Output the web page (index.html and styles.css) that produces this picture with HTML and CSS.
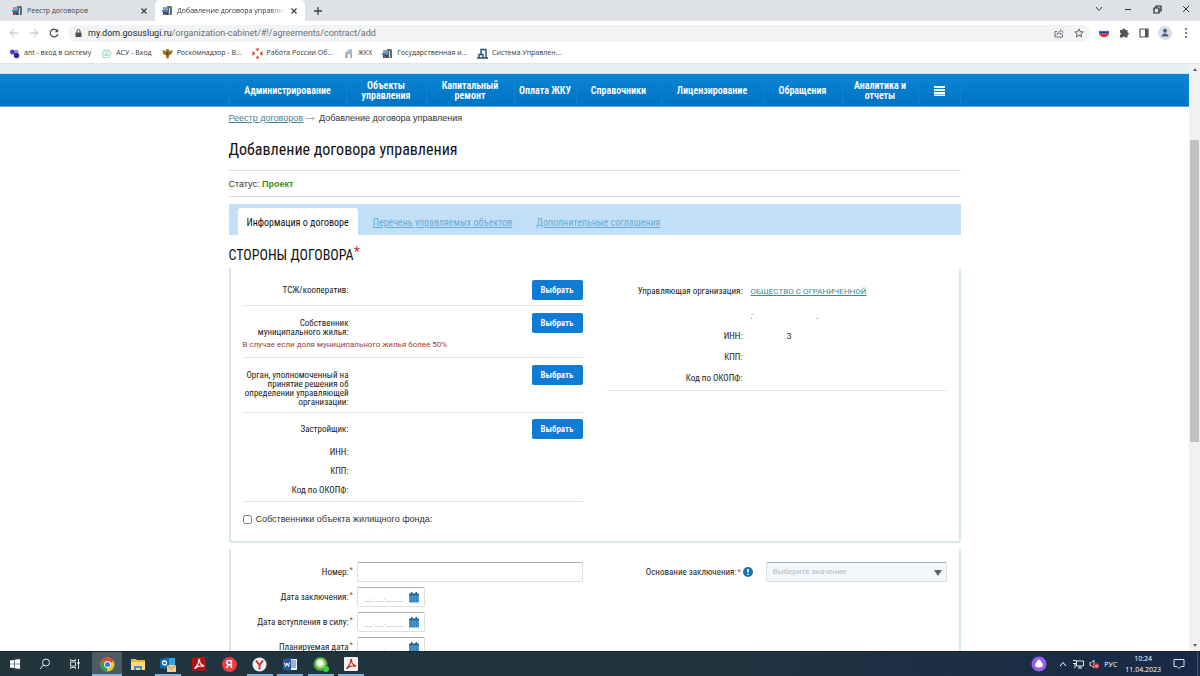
FILE: index.html
```html
<!DOCTYPE html>
<html lang="ru">
<head>
<meta charset="utf-8">
<title>Добавление договора управления</title>
<link rel="stylesheet" href="styles.css">
</head>
<body>
<svg class="defs" aria-hidden="true">
  <symbol id="house" viewBox="0 0 11 11"><path d="M1 2h4v6H1z" fill="#8aa4b4"/><path d="M5 1h4l1 1v8H6z" fill="#53717f"/><path d="M7 3h1v7H7z" fill="#c9dbe3"/><path d="M0 5h6v2H0z" fill="#3e86c1"/><path d="M1 7h5v3H1z" fill="#394c5c"/><path d="M2 8h2v2H2z" fill="#c8483e"/></symbol>
  <symbol id="cross" viewBox="0 0 8 8"><path d="M1.5 1.5l5 5m0-5l-5 5" stroke="#3c4043" stroke-width="1.2"/></symbol>
  <symbol id="cal" viewBox="0 0 10 11"><path d="M0 2h10v8.500H0z" fill="#4e9bd0"/><path d="M0 1.500h10v2H0z" fill="#24618f"/><path d="M2 0h1.500v2H2zm4.500 0H8v2H6.500z" fill="#24618f"/><path d="M0 6h10M0 8.300h10M2.500 4v6.500M5 4v6.500M7.500 4v6.500" stroke="#2f77ae" stroke-width=".5"/></symbol>
  <symbol id="pdf" viewBox="0 0 14 14"><path d="M3 11c1-1 4-5 3.700-8 0-1 1-1 .900 0-.200 3 2 5 3.900 5.500.600.400 0 1-1 .700C8 8.700 5 9.300 3.600 11.200 3 11.600 2.500 11.400 3 11z" fill="none" stroke="currentColor" stroke-width="1.100"/></symbol>
</svg>

<header class="browser">
  <div class="tabstrip">
    <div class="tab"><svg class="fav"><use href="#house"/></svg><span>Реестр договоров</span><button class="plain" aria-label="Закрыть"><svg class="x"><use href="#cross"/></svg></button></div>
    <div class="tab active"><svg class="fav"><use href="#house"/></svg><span>Добавление договора управления</span><button class="plain" aria-label="Закрыть"><svg class="x"><use href="#cross"/></svg></button></div>
    <button class="plain newtab" aria-label="Новая вкладка"><svg width="10" height="10"><path d="M5 1v8M1 5h8" stroke="#3c4043" stroke-width="1.300"/></svg></button>
    <div class="winctl">
      <button class="plain" aria-label="Поиск вкладок"><svg width="10" height="10"><path d="M2 3l3 3.500L8 3" fill="none" stroke="#444"/></svg></button>
      <button class="plain" aria-label="Свернуть"><svg width="10" height="10"><path d="M2 5.500h6" stroke="#333"/></svg></button>
      <button class="plain" aria-label="Окно"><svg width="10" height="10"><path d="M2 4h5v5H2zM4 4V2h5v5H7" fill="none" stroke="#222" stroke-width="1.200"/></svg></button>
      <button class="plain" aria-label="Закрыть окно"><svg width="10" height="10"><path d="M2 2l6 6m0-6L2 8" stroke="#333"/></svg></button>
    </div>
  </div>
  <div class="toolbar">
    <button class="plain nav-btn" aria-label="Назад"><svg width="10" height="10"><path d="M9 5H1.500M5 1.200L1.200 5 5 8.800" fill="none" stroke="#b5b8bb"/></svg></button>
    <button class="plain nav-btn" aria-label="Вперёд"><svg width="10" height="10"><path d="M1 5h7.500M5 1.200L8.800 5 5 8.800" fill="none" stroke="#b5b8bb"/></svg></button>
    <button class="plain nav-btn" aria-label="Обновить"><svg width="10" height="10"><path d="M8.300 3A3.800 3.800 0 1 0 8.800 6" fill="none" stroke="#50555a" stroke-width="1.300"/><path d="M9.200.800v3.500H5.700z" fill="#50555a"/></svg></button>
    <div class="omnibox">
      <svg width="7" height="8"><path d="M.5 3.500h6V8h-6z" fill="#4a4d51"/><path d="M2 3.500V2a1.500 1.500 0 0 1 3 0v1.500" fill="none" stroke="#4a4d51"/></svg>
      <span class="url"><b>my.dom.gosuslugi.ru</b>/organization-cabinet/#!/agreements/contract/add</span>
      <svg width="10" height="10"><path d="M3 3.500H1V9h7.500V6.500" fill="none" stroke="#6b6f73"/><path d="M3 7c0-2.500 1.500-3.500 3.500-3.500V1.700L9.300 4.200 6.500 6.600V5C5 5 4 5.500 3 7z" fill="none" stroke="#6b6f73" stroke-width=".8"/></svg>
      <svg class="star" width="10" height="10"><path d="M5 .900l1.200 2.800 3 .2-2.300 2 .7 3L5 7.300 2.400 8.900l.7-3-2.300-2 3-.2z" fill="none" stroke="#50555a" stroke-width=".9"/></svg>
    </div>
    <div class="exts">
      <svg width="12" height="12"><path d="M1 3h10v2.500H1z" fill="#e9e9f0"/><path d="M1 4.200h10v2.500H1z" fill="#2647a5"/><path d="M1 6.500h10c-1 5-9 5-10 0z" fill="#d33a3c"/></svg>
      <svg width="12" height="12"><path d="M2 3h2.500a1.400 1.400 0 0 1 2.800 0H9.500v2.400a1.300 1.300 0 0 1 0 2.600v2.500H7.200a1.300 1.300 0 0 0-2.500 0H2V8a1.300 1.300 0 0 0 0-2.500z" fill="#50555a"/></svg>
      <svg width="12" height="12"><path d="M2 2h8v8H2z" fill="none" stroke="#50555a" stroke-width="1.200"/><path d="M7 2h3v8H7z" fill="#50555a"/></svg>
      <svg width="14" height="14"><circle cx="7" cy="7" r="7" fill="#d8dde6"/><circle cx="7" cy="4.800" r="2" fill="#4b6080"/><path d="M3.500 10.500c0-4 7-4 7 0z" fill="#4b6080"/></svg>
      <svg width="12" height="12"><circle cx="6" cy="2" r="1" fill="#50555a"/><circle cx="6" cy="6" r="1" fill="#50555a"/><circle cx="6" cy="10" r="1" fill="#50555a"/></svg>
    </div>
  </div>
  <nav class="bookmarks">
    <a href="#"><svg width="11" height="11"><circle cx="3.500" cy="4" r="2.500" fill="#4a3fbd"/><circle cx="7.500" cy="3.500" r="2" fill="#9a93dd"/><circle cx="7.500" cy="7.500" r="2.700" fill="#33249a"/></svg>ant - вход в систему</a>
    <a href="#"><svg width="11" height="11"><path d="M.5 5L3 1.500h5L10.500 5 9 10H2z" fill="#a7dfca"/><path d="M3 5h5v3.500H3zM2 5l3.500-2.500L9 5" fill="none" stroke="#fff"/></svg>АСУ - Вход</a>
    <a href="#"><svg width="11" height="11"><path d="M.5 2l3 1 1-2h2l1 2 3-1-.5 4-2.500 1-1 3.500h-2L3.500 7 1 6z" fill="#9d7a24"/><path d="M4.500 4h2v3h-2z" fill="#54401a"/></svg>Роскомнадзор - В...</a>
    <a href="#"><svg width="11" height="11"><path d="M3.500.5h4l-2 3zM3.500 10.500h4l-2-3zM.5 3v5l3-2.500zM10.500 3v5l-3-2.500z" fill="#d6482f"/></svg>Работа России Об...</a>
    <a href="#"><svg width="11" height="11"><path d="M2 5l3-3 4-1v9H7V6H5v4H2z" fill="#9fb9cc"/></svg>ЖКХ</a>
    <a href="#"><svg width="11" height="11"><use href="#house"/></svg>Государственная и...</a>
    <a href="#"><svg width="11" height="11"><path d="M4 7V1.500h5V10M0 10h11M2 10V6.500h4V10" fill="none" stroke="#1f4e70" stroke-width="1.400"/></svg>Система Управлен...</a>
  </nav>
</header>

<div class="viewport">
  <div class="page">
    <div class="band"></div>
    <nav class="mainnav">
      <div class="navgrid">
        <a href="#">Администрирование</a><a href="#">Объекты<br>управления</a><a href="#">Капитальный<br>ремонт</a><a href="#">Оплата ЖКУ</a><a href="#">Справочники</a><a href="#">Лицензирование</a><a href="#">Обращения</a><a href="#">Аналитика и<br>отчеты</a>
        <button class="plain" aria-label="Меню"><svg width="11" height="10"><path d="M0 1h11M0 4h11M0 7h11M0 9.500h11" stroke="#fff" stroke-width="1.800"/></svg></button>
      </div>
    </nav>
    <main class="content">
      <div class="crumbs"><a href="#">Реестр договоров</a><svg width="9" height="5"><path d="M0 2.500h8M6 .5l2 2-2 2" fill="none" stroke="#999" stroke-width=".8"/></svg><span>Добавление договора управления</span></div>
      <h1>Добавление договора управления</h1>
      <p class="status">Статус: <strong>Проект</strong></p>
      <nav class="subtabs"><a class="on" href="#">Информация о договоре</a><a href="#">Перечень управляемых объектов</a><a href="#">Дополнительные соглашения</a></nav>
      <h2>СТОРОНЫ ДОГОВОРА<span class="req">*</span></h2>

      <section class="panel parties">
        <div>
          <div class="row"><span class="lbl">ТСЖ/кооператив:</span><button class="pick">Выбрать</button></div>
          <div class="row"><span class="lbl">Собственник муниципального жилья:</span><button class="pick">Выбрать</button><p class="warn">В случае если доля муниципального жилья более 50%</p></div>
          <div class="row"><span class="lbl">Орган, уполномоченный на принятие решения об определении управляющей организации:</span><button class="pick">Выбрать</button></div>
          <div class="row dev"><span class="lbl">Застройщик:</span><button class="pick">Выбрать</button><span class="lbl">ИНН:</span><span class="lbl">КПП:</span><span class="lbl">Код по ОКОПФ:</span></div>
          <label class="check"><input type="checkbox">Собственники объекта жилищного фонда:</label>
        </div>
        <div>
          <dl class="org">
            <dt>Управляющая организация:</dt><dd class="name"><a href="#">ОБЩЕСТВО С ОГРАНИЧЕННОЙ</a><span class="rest"><i>:</i><i>.</i></span></dd>
            <dt>ИНН:</dt><dd class="inn">3</dd>
            <dt>КПП:</dt><dd></dd>
            <dt>Код по ОКОПФ:</dt><dd></dd>
          </dl>
        </div>
      </section>

      <section class="panel form">
        <div class="fields">
          <label for="num">Номер:</label><span class="req">*</span><input id="num" type="text">
          <label for="d1">Дата заключения:</label><span class="req">*</span><div class="date"><input id="d1" type="text" placeholder="__.__.____"><svg width="10" height="11"><use href="#cal"/></svg></div>
          <label for="d2">Дата вступления в силу:</label><span class="req">*</span><div class="date"><input id="d2" type="text" placeholder="__.__.____"><svg width="10" height="11"><use href="#cal"/></svg></div>
          <label for="d3">Планируемая дата</label><span class="req">*</span><div class="date"><input id="d3" type="text" placeholder="__.__.____"><svg width="10" height="11"><use href="#cal"/></svg></div>
        </div>
        <div class="basis">
          <label for="basis">Основание заключения:</label><span class="req">*</span>
          <svg width="10" height="10"><circle cx="5" cy="5" r="5" fill="#1672b9"/><path d="M5 2v3.500M5 6.700v1.300" stroke="#fff" stroke-width="1.600"/></svg>
          <div class="selwrap"><select id="basis"><option>Выберите значение</option></select><svg width="8" height="6"><path d="M0 0h8L4 6z" fill="#5d6166"/></svg></div>
        </div>
      </section>
    </main>
  </div>
  <div class="scroll"><svg width="6" height="4"><path d="M3 0l2 3H1z" fill="#606060"/></svg><div class="thumb"></div><svg width="6" height="4"><path d="M3 4L1 1h4z" fill="#606060"/></svg></div>
</div>

<footer class="taskbar">
  <button class="plain t" aria-label="Пуск"><svg width="12" height="12"><path d="M1 2.500l4-.6v3.800H1zM5.600 1.800L11 1v4.700H5.600zM1 6.300h4v3.800l-4-.6zM5.600 6.300H11V11l-5.400-.8z" fill="#fff"/></svg></button>
  <button class="plain t" aria-label="Поиск"><svg width="12" height="12"><circle cx="7" cy="4.500" r="3.500" fill="none" stroke="#e8eced"/><path d="M4.500 7L1 11" stroke="#e8eced"/></svg></button>
  <button class="plain t" aria-label="Представление задач"><svg width="12" height="12"><path d="M1.500 4h5v4h-5zM1.500 1v1.500h5V1M1.500 11V9.500h5V11M9.500 1v10" fill="none" stroke="#d5dadb"/><path d="M8.500 4h2v2h-2z" fill="#fff"/></svg></button>
  <div class="apps">
    <button class="plain t cur" aria-label="Chrome"><svg width="15" height="15"><circle cx="7.500" cy="7.500" r="7" fill="#f2c32e"/><path d="M7.500 7.500L1.400 4A7 7 0 0 1 13.600 4z" fill="#df4937"/><path d="M7.500 7.500L1.400 4a7 7 0 0 0 5.500 10.500z" fill="#2fa457"/><circle cx="7.500" cy="7.500" r="3.400" fill="#fff"/><circle cx="7.500" cy="7.500" r="2.600" fill="#3f7ee0"/></svg></button>
    <button class="plain t" aria-label="Проводник"><svg width="14" height="12"><path d="M0 1h5l1 1h8v10H0z" fill="#e5b63f"/><path d="M0 4h14v8H0z" fill="#f9dc7c"/><path d="M3 12V8h8v4H9v-2H5v2z" fill="#3f92c9"/></svg></button>
    <button class="plain t run" aria-label="Outlook"><svg width="16" height="15"><path d="M7 1h8v8H7z" fill="#36a4df"/><path d="M0 2l9-2v12L0 11z" fill="#0b6ab3"/><circle cx="4.500" cy="6" r="2" fill="none" stroke="#fff" stroke-width="1.300"/><path d="M7 8h9v7H7z" fill="#f2cc93"/><path d="M7 8l4.500 4L16 8" fill="none" stroke="#b98444"/></svg></button>
    <button class="plain t" aria-label="Acrobat"><svg width="14" height="14" color="#fff"><rect width="14" height="14" rx="2" fill="#ae1212"/><use href="#pdf"/></svg></button>
    <button class="plain t ya" aria-label="Яндекс"><span>Я</span></button>
    <button class="plain t run" aria-label="Яндекс Браузер"><svg width="15" height="15"><circle cx="7.500" cy="7.500" r="7" fill="#f1f1f1"/><path d="M4 3.500l3.500 4.500V12.500M11 3.500L7.500 8" fill="none" stroke="#d32f35" stroke-width="2"/></svg></button>
    <button class="plain t run word" aria-label="Word"><svg width="14" height="13"><path d="M7 1h7v11H7z" fill="#e9eef7"/><path d="M8 3h5M8 5h5M8 7h5M8 9h5" stroke="#2a579a" stroke-width=".8"/><path d="M0 1l8-1v13l-8-1z" fill="#2a579a"/><path d="M1.500 4.500l1 4L4 5l1.500 3.500 1-4" fill="none" stroke="#fff"/></svg></button>
    <button class="plain t run" aria-label="Мессенджер"><svg width="16" height="15"><circle cx="7.500" cy="7" r="7" fill="#4ea73b"/><circle cx="7.500" cy="6.500" r="5" fill="#a8dc8d"/><circle cx="7" cy="6" r="3" fill="#f3faf0"/><circle cx="13" cy="12" r="3" fill="#36d431"/></svg></button>
    <button class="plain t run" aria-label="PDF"><svg width="14" height="14" color="#c3262c"><rect width="14" height="14" rx="1" fill="#f4f1f1"/><use href="#pdf"/></svg></button>
  </div>
  <div class="tray">
    <svg width="16" height="16"><circle cx="8" cy="8" r="7.500" fill="#9a5cf0"/><path d="M8 3.500c1.500 0 4 4.500 4 6 0 2.500-8 2.500-8 0 0-1.500 2.500-6 4-6z" fill="#fff"/></svg>
    <svg class="caret" width="8" height="6"><path d="M1 5l3-3.500L7 5" fill="none" stroke="#fff"/></svg>
    <svg width="12" height="10"><path d="M3.500 2h7v5h-7zM5 9h4M7 7v2M0 1.500h3.500v3H0M2 4.500V9" fill="none" stroke="#e4e8ee"/></svg>
    <svg width="11" height="10"><path d="M1 3.500h1.500L5 1v8L2.500 6.500H1z" fill="none" stroke="#e4e8ee" stroke-width=".9"/><circle cx="7.500" cy="7" r="2.700" fill="#d23b42"/><path d="M6.500 6l2 2m0-2l-2 2" stroke="#fff" stroke-width=".7"/></svg>
    <span class="lang">РУС</span>
    <span class="clock">10:24<br>11.04.2023</span>
    <svg width="12" height="12"><path d="M1 1.500h10v7H8L6 10.500 4 8.500H1z" fill="none" stroke="#e4e8ee"/></svg>
  </div>
</footer>
</body>
</html>
```
FILE: styles.css
```css
* { box-sizing: border-box; }
body { margin: 0; height: 100vh; display: flex; flex-direction: column; overflow: hidden; background: #fff; color: #333; font: 9px/12px "Liberation Sans", Arial, sans-serif; }
svg { display: block; flex: none; }
.defs { position: absolute; width: 0; height: 0; }
.plain { border: 0; background: none; padding: 0; display: flex; align-items: center; justify-content: center; }
h1, h2, p, dl, dd { margin: 0; }

.browser { flex: none; font-family: "Open Sans", "Noto Sans", sans-serif; border-bottom: 1px solid #e2e4e6; }
.tabstrip { height: 21px; display: flex; align-items: stretch; background: #dee1e6; font-size: 7px; }
.tab { width: 155px; display: flex; align-items: center; gap: 4px; padding: 0 7px 0 12px; color: #45494d; }
.tab span { flex: 1; overflow: hidden; white-space: nowrap; }
.tab.active { width: 150px; padding: 0 7px; background: #fff; border-radius: 5px 5px 0 0; color: #33373b; }
.tab.active span { mask-image: linear-gradient(90deg, #000 85%, transparent); }
.fav { width: 11px; height: 11px; }
.x { width: 8px; height: 8px; }
.newtab { width: 26px; }
.winctl { margin-left: auto; display: flex; gap: 18px; padding-right: 9px; }
.winctl button { width: 11px; height: 18px; }
.toolbar { height: 22px; display: flex; align-items: center; padding: 2px 8px 0; }
.nav-btn { width: 12px; margin-right: 8px; }
.omnibox { flex: 1; height: 17px; display: flex; align-items: center; gap: 6px; background: #f1f3f4; border-radius: 9px; padding: 0 6px 0 7px; }
.url { flex: 1; font-family: Roboto, "Noto Sans", sans-serif; font-size: 9px; color: #6d7175; }
.url b { font-weight: 400; color: #26292c; }
.star { margin-left: 4px; }
.exts { display: flex; align-items: center; gap: 8px; padding-left: 8px; }
.bookmarks { height: 20px; display: flex; align-items: center; gap: 10px; padding: 0 9px; font-size: 7px; }
.bookmarks a { display: flex; align-items: center; gap: 4px; color: #33373b; text-decoration: none; white-space: nowrap; }

.viewport { flex: 1; min-height: 0; display: flex; overflow: hidden; }
.page { flex: 1; min-width: 0; overflow: hidden; }
.scroll { width: 11px; background: #f1f1f1; display: flex; flex-direction: column; align-items: center; justify-content: space-between; padding: 4px 0; }
.thumb { width: 9px; height: 302px; background: #c1c1c1; margin: 68px 0 auto; }
.band { height: 10px; background: #e6f1f3; border-bottom: 1px solid #c6e6f4; }
.mainnav { background: linear-gradient(#0b85d3, #0173c4); border-bottom: 1px solid #5fabdc; }
.navgrid, .content { width: 100%; max-width: 732px; margin: 0 auto; }
.navgrid { display: grid; grid-template-columns: 117fr 80fr 88fr 62fr 85fr 102fr 79fr 76fr 42fr; height: 32px; border-left: 1px solid #1480cc; }
.navgrid > * { display: flex; align-items: center; justify-content: center; text-align: center; border-right: 1px solid #1480cc; padding-top: 2px; }
.navgrid a, .subtabs, .lbl, .org dt, .pick, .panel label, h1, h2 { font-family: "Roboto Condensed", "Liberation Sans Narrow", Roboto, sans-serif; }
.navgrid a { color: #fff; font-size: 10px; line-height: 10px; font-weight: 600; text-decoration: none; }

a { color: #3d8797; }
.crumbs { display: flex; align-items: center; gap: 3px; padding-top: 5px; }
.crumbs svg + span { margin-left: 1px; }
h1 { font-size: 16px; line-height: 24px; font-weight: 400; color: #111; padding: 14px 0 8px; border-bottom: 1px solid #dcdfe0; }
.status { padding: 7px 0 6px; border-bottom: 1px solid #dcdfe0; }
.status strong { color: #3c8a1e; }
.subtabs { margin-top: 7px; height: 31px; background: #c1dff6; display: flex; align-items: flex-end; padding-left: 9px; font-size: 10px; }
.subtabs a { line-height: 25px; padding-top: 2px; color: #69acd6; margin-left: 15px; margin-right: 9px; }
.subtabs .on { margin: 0; padding: 2px 9px 0; background: #fff; color: #111; text-decoration: none; border-radius: 3px 3px 0 0; }
h2 { font-size: 14px; line-height: 20px; font-weight: 400; color: #111; padding: 10px 0 3px; display: flex; }
.req { color: #c4372f; }
h2 .req { line-height: 14px; }

.panel { border: solid #d9e8eb; border-width: 0 2px 2px; border-radius: 0 0 3px 3px; padding: 0 12px; display: grid; grid-template-columns: 1fr 1fr; gap: 24px; }
.row { display: grid; grid-template-columns: 106px 1fr; padding: 7px 0 5px; border-bottom: 1px solid #e0e3e4; }
.row:first-child { padding-top: 12px; }
.lbl { text-align: right; line-height: 9px; padding-top: 6px; color: #222; }
.pick { justify-self: end; width: 51px; height: 20px; border: 0; border-radius: 2px; background: #0f7bd5; color: #fff; font-size: 9px; font-weight: 600; padding: 0; }
.warn { grid-column: 1 / -1; color: #a53c38; font: 8px/10px Roboto, "Liberation Sans", sans-serif; padding: 3px 0 2px; white-space: nowrap; }
.dev { padding-top: 6px; padding-bottom: 1px; }
.dev .lbl:not(:first-child) { grid-column: 1; padding: 5px 0; }
.dev .lbl:first-child { padding-bottom: 9px; }
.panel .check { display: flex; align-items: center; gap: 4px; padding: 11px 0 16px; font-family: "Liberation Sans", Arial, sans-serif; }
.check input { width: 9px; height: 9px; margin: 0; }
.org { display: grid; grid-template-columns: 136px 1fr; column-gap: 8px; border-bottom: 1px solid #e0e3e4; padding: 17px 0 0; }
.org dt { text-align: right; color: #222; padding-bottom: 9px; }
.org dt:last-of-type { padding-bottom: 6px; }
.org dd { padding-bottom: 8px; }
.org dd:last-child { padding: 0; }
.name a { font-family: Roboto, "Liberation Sans", sans-serif; font-size: 8px; }
.rest { display: flex; gap: 63px; padding-top: 13px; line-height: 11px; color: #3d8797; }
.org .inn { padding-left: 36px; }

.form { margin-top: 6px; padding-top: 13px; padding-bottom: 40px; align-items: start; }
.fields { display: grid; grid-template-columns: 106px 8px 1fr; row-gap: 5px; }
.form label { text-align: right; line-height: 20px; color: #222; white-space: nowrap; }
.form .req { padding-left: 1px; line-height: 16px; }
.form input, .form select { width: 100%; height: 20px; border: 1px solid #dcdfe1; border-top-color: #a9adb0; border-radius: 2px; background: #fff; font: 9px/12px "Liberation Sans", Arial, sans-serif; padding: 0 6px; margin: 0; }
.form input::placeholder { color: #b5b9bc; font-size: 8px; }
.date { position: relative; width: 68px; }
.date svg { position: absolute; right: 6px; top: 5px; }
.basis { display: grid; grid-template-columns: 130px 6px 10px 1fr; align-items: center; }
.selwrap { position: relative; margin-left: 13px; }
.form select { appearance: none; background: #f3f6fb; color: #b7bcc2; font: 8px/12px Roboto, "Liberation Sans", sans-serif; }
.selwrap svg { position: absolute; right: 5px; top: 8px; }

.taskbar { flex: none; height: 25px; display: flex; align-items: stretch; background: linear-gradient(90deg, #22353d, #20343f 60%, #182947); color: #fff; border-top: 1px solid #17242b; }
.t { width: 30px; }
.apps { width: 274px; margin-left: 2px; display: flex; justify-content: space-between; }
.run, .cur { border-bottom: 2px solid #75b5e6; padding-top: 2px; }
.run { width: 26px; margin: 0 2px; }
.cur { background: #4d5c62; }
.ya span { width: 15px; height: 15px; border-radius: 50%; background: #ea3b3f; color: #fff; font: 700 10px/15px "Liberation Sans", sans-serif; text-align: center; }
.tray { margin-left: auto; margin-right: 2px; padding-right: 12px; border-right: 1px solid #46566f; display: flex; align-items: center; gap: 4px; font: 7px/11px "Open Sans", "Noto Sans", sans-serif; }
.caret { margin: 0 2px 0 8px; }
.clock { text-align: center; margin: 0 8px 0 4px; }
```
